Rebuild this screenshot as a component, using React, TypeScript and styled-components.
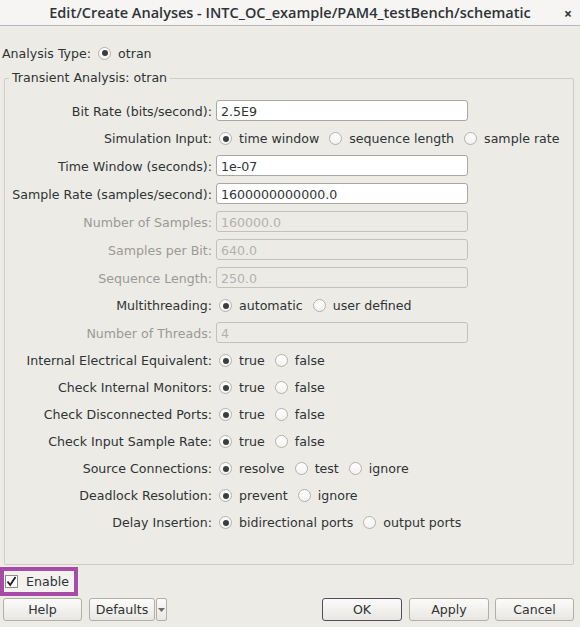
import React from "react";
import styled, { createGlobalStyle } from "styled-components";

const GlobalStyle = createGlobalStyle`
  html, body { margin: 0; padding: 0; background: #edebe6; }
  body { font-family: "DejaVu Sans", "Liberation Sans", sans-serif; font-size: 12.6px; color: #2e3436; }
  * { box-sizing: border-box; }
`;

const Window = styled.div`
  width: 580px;
  height: 627px;
  display: flex;
  flex-direction: column;
  background: #edebe6;
  overflow: hidden;
`;

const TitleBar = styled.div`
  height: 26px;
  flex: none;
  display: flex;
  align-items: center;
  justify-content: center;
  position: relative;
  background: #f6f5f4;
  border-bottom: 1px solid #b8b6b2;
  font-family: "Open Sans", "Noto Sans", sans-serif;
  font-weight: 600;
  font-size: 14.5px;
  color: #2e3436;
`;

const CloseX = styled.span`
  position: absolute;
  right: 8px;
  top: 4px;
  font-size: 14px;
  font-weight: 700;
  color: #2e3436;
`;

const TypeRow = styled.div`
  height: 20px;
  margin-top: 17px;
  padding-left: 2px;
  display: flex;
  align-items: center;
  gap: 7px;
`;

const Group = styled.fieldset`
  margin: 7px 6px 0 4px;
  padding: 11px 0 28px 0;
  border: 1px solid #cfccc6;
  border-radius: 2px;
  min-width: 0;
`;

const Legend = styled.legend`
  margin-left: 4px;
  padding: 0 3px 0 3px;
  line-height: 16px;
`;

const Form = styled.div`
  display: grid;
  grid-template-columns: 207px 252px;
  column-gap: 4px;
  align-items: center;
`;

const Label = styled.div<{ $disabled?: boolean }>`
  text-align: right;
  white-space: nowrap;
  color: ${(p) => (p.$disabled ? "#9a9a97" : "#2e3436")};
`;

const Field = styled.input`
  height: 21px;
  width: 252px;
  margin: 3px 0 4px 0;
  border: 1px solid #a9a7a3;
  border-radius: 3px;
  background: #ffffff;
  font-family: "DejaVu Sans", sans-serif;
  font-size: 12.6px;
  color: #2e3436;
  padding: 1px 4px 0 4px;
  outline: none;
  &:disabled {
    background: #edebe6;
    border-color: #c4c1bb;
    color: #b4b2ae;
  }
`;

const Options = styled.div`
  height: 27px;
  display: flex;
  align-items: center;
  gap: 10px;
  padding-left: 3px;
  white-space: nowrap;
`;

const Option = styled.label`
  display: flex;
  align-items: center;
  gap: 7px;
`;

const RadioCircle = styled.span<{ $on?: boolean }>`
  width: 13px;
  height: 13px;
  border-radius: 50%;
  border: 1px solid #b4b1ab;
  background: linear-gradient(#ffffff, #f3f2f0);
  display: inline-flex;
  align-items: center;
  justify-content: center;
  flex: none;
  &::after {
    content: "";
    width: 6px;
    height: 6px;
    border-radius: 50%;
    background: ${(p) => (p.$on ? "#3b3e40" : "transparent")};
  }
`;

const EnableBox = styled.div`
  margin-top: 2px;
  width: 78px;
  height: 29px;
  border: 4px solid #a64ca6;
  background: #f3f2ef;
  display: flex;
  align-items: center;
  gap: 8px;
  padding-left: 1px;
`;

const CheckSquare = styled.span`
  width: 13px;
  height: 13px;
  border: 1px solid #8e8c88;
  background: #ffffff;
  display: inline-flex;
  align-items: center;
  justify-content: center;
`;

const ButtonRow = styled.div`
  margin-top: 2px;
  padding: 0 6px 0 3px;
  display: flex;
  align-items: center;
`;

const Button = styled.button<{ $w: number; $default?: boolean }>`
  width: ${(p) => p.$w}px;
  height: 23px;
  border: 1px solid ${(p) => (p.$default ? "#4f4c66" : "#b3afa8")};
  border-radius: 3px;
  background: linear-gradient(#fbfbfa, #e9e7e3);
  font-family: "DejaVu Sans", sans-serif;
  font-size: 12.6px;
  color: #2e3436;
  padding: 0;
`;

const ArrowButton = styled.button`
  width: 11px;
  height: 23px;
  margin-left: 1px;
  border: 1px solid #b3afa8;
  border-radius: 2px;
  background: linear-gradient(#fbfbfa, #e9e7e3);
  padding: 0;
  display: flex;
  align-items: center;
  justify-content: center;
`;

const Spacer = styled.div`
  flex: 1;
`;

const Gap = styled.div<{ $w: number }>`
  width: ${(p) => p.$w}px;
  flex: none;
`;

type Opt = { label: string; on?: boolean };

const Radios = ({ opts }: { opts: Opt[] }) => (
  <Options>
    {opts.map((o) => (
      <Option key={o.label}>
        <RadioCircle $on={o.on} />
        {o.label}
      </Option>
    ))}
  </Options>
);

const tf = (a = "true", b = "false"): Opt[] => [{ label: a, on: true }, { label: b }];

export default function App() {
  return (
    <Window>
      <GlobalStyle />
      <TitleBar>
        Edit/Create Analyses - INTC_OC_example/PAM4_testBench/schematic
        <CloseX>×</CloseX>
      </TitleBar>
      <TypeRow>
        Analysis Type:
        <Option>
          <RadioCircle $on />
          otran
        </Option>
      </TypeRow>
      <Group>
        <Legend>Transient Analysis: otran</Legend>
        <Form>
          <Label>Bit Rate (bits/second):</Label>
          <Field defaultValue="2.5E9" />
          <Label>Simulation Input:</Label>
          <Radios opts={[{ label: "time window", on: true }, { label: "sequence length" }, { label: "sample rate" }]} />
          <Label>Time Window (seconds):</Label>
          <Field defaultValue="1e-07" />
          <Label>Sample Rate (samples/second):</Label>
          <Field defaultValue="1600000000000.0" />
          <Label $disabled>Number of Samples:</Label>
          <Field disabled defaultValue="160000.0" />
          <Label $disabled>Samples per Bit:</Label>
          <Field disabled defaultValue="640.0" />
          <Label $disabled>Sequence Length:</Label>
          <Field disabled defaultValue="250.0" />
          <Label>Multithreading:</Label>
          <Radios opts={tf("automatic", "user defined")} />
          <Label $disabled>Number of Threads:</Label>
          <Field disabled defaultValue="4" />
          <Label>Internal Electrical Equivalent:</Label>
          <Radios opts={tf()} />
          <Label>Check Internal Monitors:</Label>
          <Radios opts={tf()} />
          <Label>Check Disconnected Ports:</Label>
          <Radios opts={tf()} />
          <Label>Check Input Sample Rate:</Label>
          <Radios opts={tf()} />
          <Label>Source Connections:</Label>
          <Radios opts={[{ label: "resolve", on: true }, { label: "test" }, { label: "ignore" }]} />
          <Label>Deadlock Resolution:</Label>
          <Radios opts={tf("prevent", "ignore")} />
          <Label>Delay Insertion:</Label>
          <Radios opts={tf("bidirectional ports", "output ports")} />
        </Form>
      </Group>
      <EnableBox>
        <CheckSquare>
          <svg width="11" height="11" viewBox="0 0 11 11">
            <path d="M1.5 5.5 L4.2 9 L9.5 1" fill="none" stroke="#1a1a1a" strokeWidth="1.8" />
          </svg>
        </CheckSquare>
        Enable
      </EnableBox>
      <ButtonRow>
        <Button $w={79}>Help</Button>
        <Gap $w={7} />
        <Button $w={66}>Defaults</Button>
        <ArrowButton>
          <svg width="7" height="4" viewBox="0 0 7 4">
            <path d="M0 0 L7 0 L3.5 4 Z" fill="#6b6b6b" />
          </svg>
        </ArrowButton>
        <Spacer />
        <Button $w={80} $default>OK</Button>
        <Gap $w={7} />
        <Button $w={80}>Apply</Button>
        <Gap $w={6} />
        <Button $w={79}>Cancel</Button>
      </ButtonRow>
    </Window>
  );
}
